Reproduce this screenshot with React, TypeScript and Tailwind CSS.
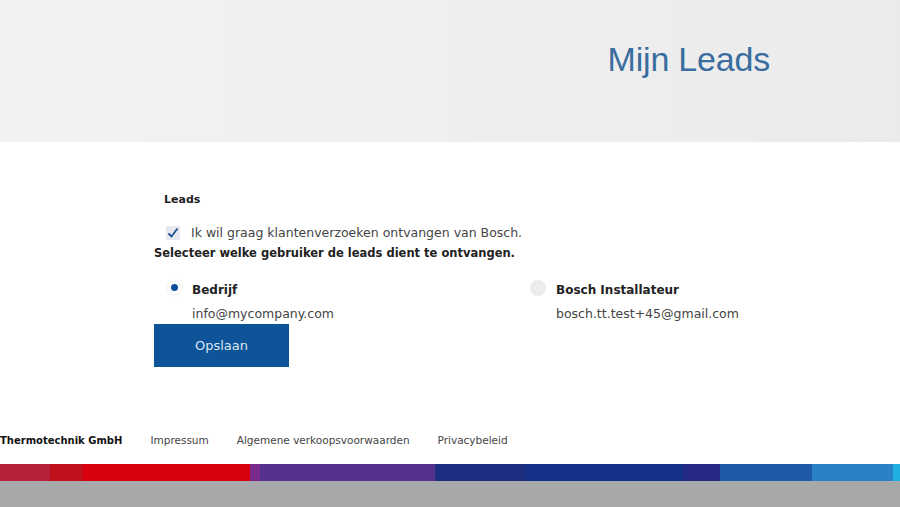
import { useState } from 'react'

const stripe = [
  { w: 50, c: 'bg-[#b5203a]' },
  { w: 33, c: 'bg-[#c0101e]' },
  { w: 167, c: 'bg-[#d8000f]' },
  { w: 10, c: 'bg-[#7a2a8a]' },
  { w: 175, c: 'bg-[#55318f]' },
  { w: 90, c: 'bg-[#1e2e80]' },
  { w: 158, c: 'bg-[#143288]' },
  { w: 37, c: 'bg-[#272a85]' },
  { w: 92, c: 'bg-[#1e5aa8]' },
  { w: 81, c: 'bg-[#2a82c4]' },
  { w: 7, c: 'bg-[#20b0e0]' },
]

export default function App() {
  const [accept, setAccept] = useState(true)
  const [target, setTarget] = useState<'company' | 'installer'>('company')

  return (
    <div className="w-[900px] h-[507px] overflow-hidden bg-white font-['DejaVu_Sans',Verdana,sans-serif] text-[#222]">
      <header className="h-[142px] bg-gradient-to-r from-[#f3f3f3] via-[#efefef] to-[#ebebeb] flex items-center justify-end pr-[130px] pb-[24px]">
        <h1 className="font-['Liberation_Sans',Arial,sans-serif] text-[34px] leading-none text-[#3a6d9f] tracking-[-0.2px]">Mijn Leads</h1>
      </header>

      <main className="h-[322px] pl-[154px] pt-[50px]">
        <div className="pl-[10px] text-[11px] font-bold">Leads</div>

        <label className="mt-[15px] pl-[12px] flex items-center gap-[11px] cursor-pointer">
          <input type="checkbox" checked={accept} onChange={() => setAccept(!accept)} className="sr-only" />
          <span className="w-[14px] h-[14px] bg-[#e6e9ee] flex items-center justify-center">
            {accept && (
              <svg viewBox="0 0 14 14" className="w-[14px] h-[14px]">
                <path d="M2.5 7.5 L5.5 10.5 L11.5 2.5" fill="none" stroke="#1b4f9a" strokeWidth="1.8" />
              </svg>
            )}
          </span>
          <span className="text-[12.5px] text-[#444]">Ik wil graag klantenverzoeken ontvangen van Bosch.</span>
        </label>

        <div className="mt-[3px] text-[11.5px] font-bold">Selecteer welke gebruiker de leads dient te ontvangen.</div>

        <div className="mt-[20px] flex">
          <button onClick={() => setTarget('company')} className="w-[376px] pl-[13px] flex items-start gap-[11px] text-left">
            <span className="mt-[-2px] w-[14px] h-[14px] rounded-full bg-white shadow-[0_0_2px_rgba(0,0,0,0.15)] flex items-center justify-center">
              {target === 'company' && <span className="w-[7px] h-[7px] rounded-full bg-[#0f4f9b]" />}
            </span>
            <span>
              <span className="block text-[12px] font-bold leading-[15px]">Bedrijf</span>
              <span className="block mt-[7px] text-[12.5px] text-[#444]">info@mycompany.com</span>
            </span>
          </button>
          <button onClick={() => setTarget('installer')} className="flex items-start gap-[10px] text-left">
            <span className="mt-[-3px] w-[16px] h-[16px] rounded-full bg-[#ececec] flex items-center justify-center">
              {target === 'installer' && <span className="w-[7px] h-[7px] rounded-full bg-[#0f4f9b]" />}
            </span>
            <span>
              <span className="block text-[12px] font-bold leading-[15px]">Bosch Installateur</span>
              <span className="block mt-[7px] text-[12.5px] text-[#444]">bosch.tt.test+45@gmail.com</span>
            </span>
          </button>
        </div>

        <button className="mt-[1px] w-[135px] h-[43px] bg-[#0d5499] text-[#dbe6f2] text-[13px]">Opslaan</button>
      </main>

      <div className="-mt-[31px] h-[31px] flex items-start gap-[28px] text-[10.5px] text-[#444]">
        <span className="font-bold text-[10px] leading-[16px] text-[#111]">Thermotechnik GmbH</span>
        <span>Impressum</span>
        <span>Algemene verkoopsvoorwaarden</span>
        <span>Privacybeleid</span>
      </div>
      <div className="flex h-[17px]">
        {stripe.map((s, i) => (
          <div key={i} className={s.c} style={{ width: s.w }} />
        ))}
      </div>
      <div className="h-[26px] bg-[#a7a8a9]" />
    </div>
  )
}
